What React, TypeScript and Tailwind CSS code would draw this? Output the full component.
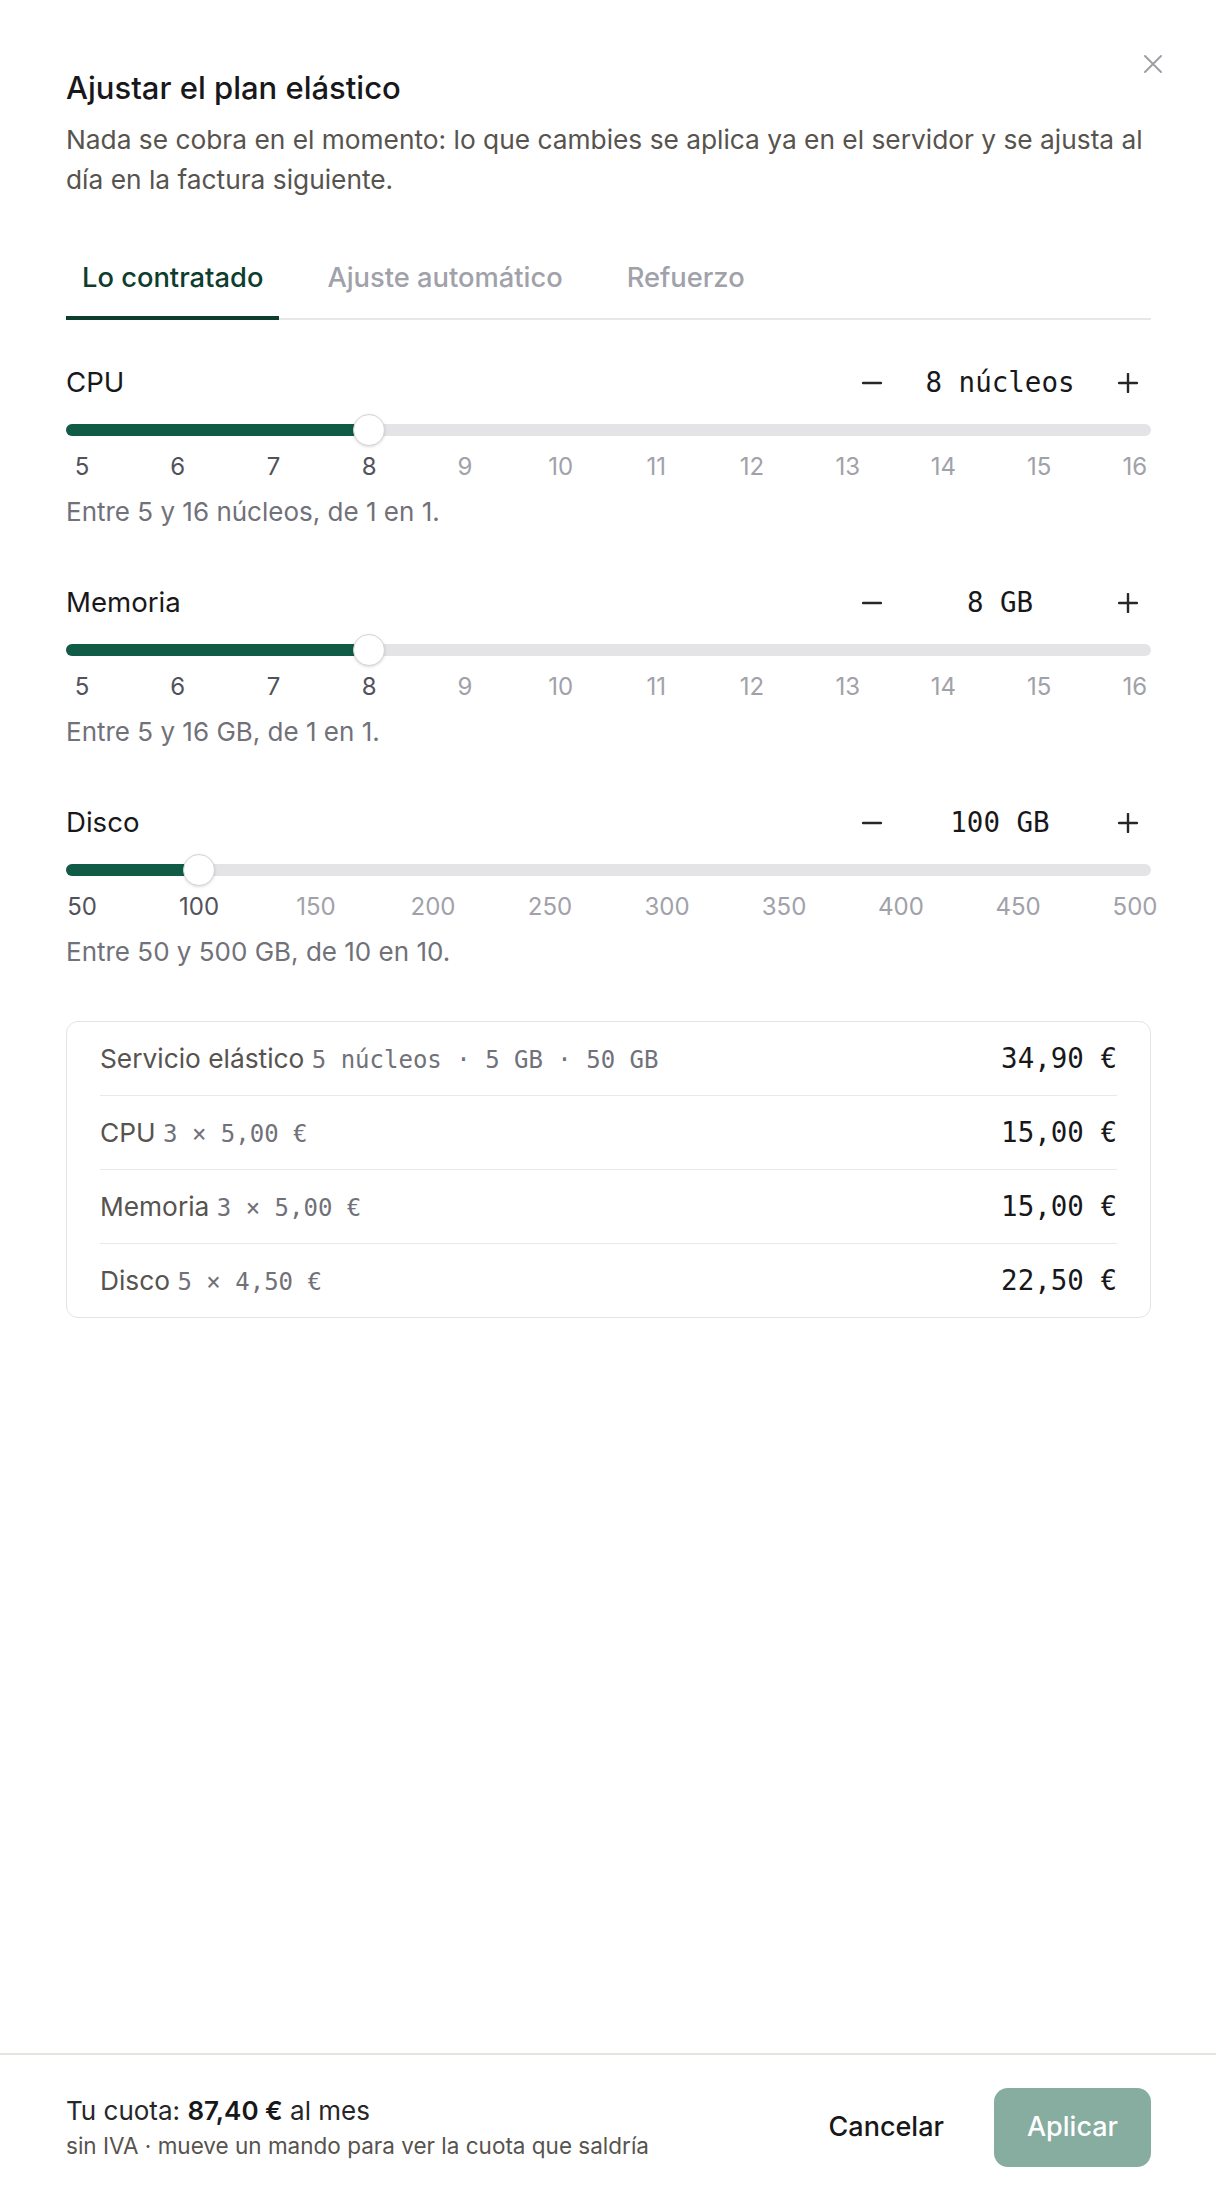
import { useState } from "react";

type Resource = {
  key: "cpu" | "mem" | "disk";
  label: string;
  unit: string;
  min: number;
  max: number;
  step: number;
  tick: number;
  hint: string;
};

const resources: Resource[] = [
  { key: "cpu", label: "CPU", unit: "núcleos", min: 5, max: 16, step: 1, tick: 1, hint: "Entre 5 y 16 núcleos, de 1 en 1." },
  { key: "mem", label: "Memoria", unit: "GB", min: 5, max: 16, step: 1, tick: 1, hint: "Entre 5 y 16 GB, de 1 en 1." },
  { key: "disk", label: "Disco", unit: "GB", min: 50, max: 500, step: 10, tick: 50, hint: "Entre 50 y 500 GB, de 10 en 10." },
];

const tabs = ["Lo contratado", "Ajuste automático", "Refuerzo"];

const lines = [
  { label: "Servicio elástico", detail: "5 núcleos · 5 GB · 50 GB", amount: "34,90 €" },
  { label: "CPU", detail: "3 × 5,00 €", amount: "15,00 €" },
  { label: "Memoria", detail: "3 × 5,00 €", amount: "15,00 €" },
  { label: "Disco", detail: "5 × 4,50 €", amount: "22,50 €" },
];

function MinusIcon() {
  return (
    <svg width="20" height="20" viewBox="0 0 20 20" fill="none">
      <path d="M1 10h18" stroke="#27272a" strokeWidth="2.4" strokeLinecap="round" />
    </svg>
  );
}

function PlusIcon() {
  return (
    <svg width="20" height="20" viewBox="0 0 20 20" fill="none">
      <path d="M1 10h18M10 1v18" stroke="#27272a" strokeWidth="2.4" strokeLinecap="round" />
    </svg>
  );
}

function Slider({ r, value }: { r: Resource; value: number }) {
  const pct = (value - r.min) / (r.max - r.min);
  const ticks: number[] = [];
  for (let t = r.min; t <= r.max; t += r.tick) ticks.push(t);

  return (
    <>
      <div className="relative mt-[10px] flex h-[34px] items-center">
        <div className="h-3 w-full rounded-full bg-[#e4e4e7]">
          <div
            className="h-3 rounded-full bg-[#0f5b45]"
            style={{ width: `calc(16px + ${pct} * (100% - 32px))` }}
          />
        </div>
        <div
          className="absolute top-[1px] size-8 rounded-full border border-[#d4d4d8] bg-white shadow-[0_1px_3px_rgba(0,0,0,0.15)]"
          style={{ left: `calc(${pct} * (100% - 32px))` }}
        />
      </div>
      <div className="mt-[6px] flex justify-between px-4 text-[24px] leading-7">
        {ticks.map((t) => (
          <span
            key={t}
            className={`flex w-0 justify-center ${t <= value ? "text-[#52525b]" : "text-[#a1a1aa]"}`}
          >
            {t}
          </span>
        ))}
      </div>
    </>
  );
}

export default function App() {
  const [tab, setTab] = useState(0);
  const [values, setValues] = useState({ cpu: 8, mem: 8, disk: 100 });

  const bump = (r: Resource, dir: number) =>
    setValues((v) => ({
      ...v,
      [r.key]: Math.min(r.max, Math.max(r.min, v[r.key] + dir * r.step)),
    }));

  return (
    <div className="flex min-h-screen flex-col bg-white font-['Inter',sans-serif] text-[#18181b]">
      <div className="relative pl-[66px] pr-[65px] pt-[68px]">
        <button className="absolute right-[43px] top-[44px] p-[10px]" aria-label="Cerrar">
          <svg width="20" height="20" viewBox="0 0 20 20" fill="none">
            <path d="M2 2l16 16M18 2L2 18" stroke="#9f9fa9" strokeWidth="2" strokeLinecap="round" />
          </svg>
        </button>

        <h2 className="text-[31px] font-medium leading-10">Ajustar el plan elástico</h2>
        <p className="mt-3 text-[26.3px] leading-10 text-[#57534e]">
          Nada se cobra en el momento: lo que cambies se aplica ya en el servidor y se ajusta al
          día en la factura siguiente.
        </p>

        <div className="mt-[60px] flex gap-8 border-b-2 border-[#e7e7e9]">
          {tabs.map((t, i) => (
            <button
              key={t}
              onClick={() => setTab(i)}
              className={`-mb-[2px] border-b-4 px-4 pb-5 text-[27.3px] font-medium leading-9 ${
                tab === i ? "border-[#0d3d2d] text-[#0d3d2d]" : "border-transparent text-[#a1a1aa]"
              }`}
            >
              {t}
            </button>
          ))}
        </div>

        <div className="mt-[43px] flex flex-col gap-[53px]">
          {resources.map((r) => (
            <section key={r.key}>
              <div className="flex h-10 items-center justify-between">
                <span className="text-[27.6px]">{r.label}</span>
                <div className="flex items-center pr-[3px]">
                  <button onClick={() => bump(r, -1)} className="flex size-10 items-center justify-center">
                    <MinusIcon />
                  </button>
                  <span className="w-[216px] text-center font-['DejaVu_Sans_Mono',monospace] text-[27.5px]">
                    {values[r.key]} {r.unit}
                  </span>
                  <button onClick={() => bump(r, 1)} className="flex size-10 items-center justify-center">
                    <PlusIcon />
                  </button>
                </div>
              </div>
              <Slider r={r} value={values[r.key]} />
              <p className="mt-[13px] text-[26px] leading-9 text-[#71717a]">{r.hint}</p>
            </section>
          ))}
        </div>

        <div className="mt-[51px] rounded-xl border border-[#e7e4dd] px-[33px]">
          {lines.map((l, i) => (
            <div
              key={l.label}
              className={`flex items-center justify-between ${
                i < lines.length - 1 ? "h-[74px] border-b border-[#ece9e3]" : "h-[73px]"
              }`}
            >
              <span className="text-[26.3px] text-[#57534e]">
                {l.label}{" "}
                <span className="font-['DejaVu_Sans_Mono',monospace] text-[24px] text-[#71717a]">{l.detail}</span>
              </span>
              <span className="font-['DejaVu_Sans_Mono',monospace] text-[27.5px]">{l.amount}</span>
            </div>
          ))}
        </div>
      </div>

      <footer className="mt-auto flex items-center justify-between border-t-2 border-[#e7e4dd] py-[33px] pl-[66px] pr-[65px]">
        <div>
          <p className="text-[26px] leading-[34px] text-[#27272a]">
            Tu cuota: <span className="font-semibold text-[#18181b]">87,40 €</span> al mes
          </p>
          <p className="mt-[3px] text-[22.5px] leading-[30px] text-[#57534e]">
            sin IVA · mueve un mando para ver la cuota que saldría
          </p>
        </div>
        <div className="flex items-center gap-[26px]">
          <button className="h-[79px] px-6 text-[27px] font-medium">Cancelar</button>
          <button className="h-[79px] rounded-[14px] bg-[#86ad9f] px-[33px] text-[27px] font-medium text-white">
            Aplicar
          </button>
        </div>
      </footer>
    </div>
  );
}
